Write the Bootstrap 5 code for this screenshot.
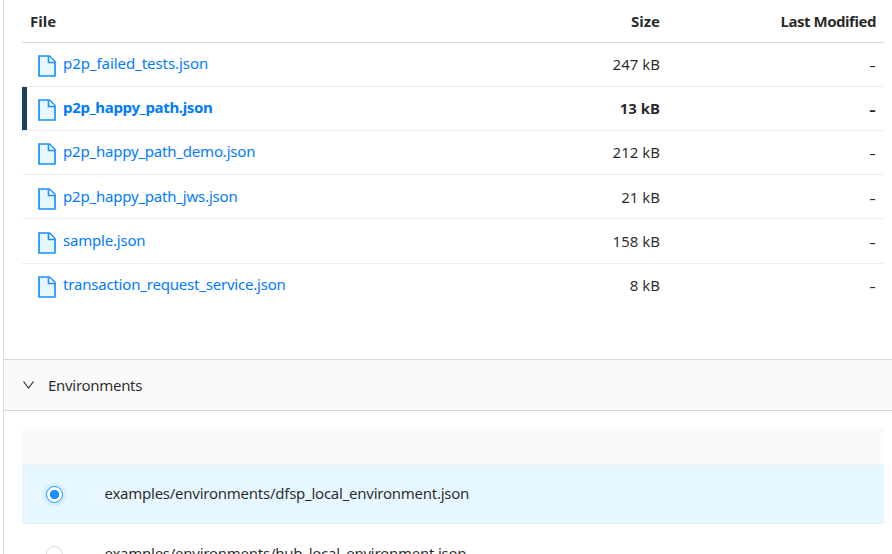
<!DOCTYPE html>
<html lang="en">
<head>
<meta charset="utf-8">
<meta name="viewport" content="width=device-width, initial-scale=1">
<title>Files and environments</title>
<link href="https://cdn.jsdelivr.net/npm/bootstrap@5.3.0/dist/css/bootstrap.min.css" rel="stylesheet">
<style>
body{font-family:"Noto Sans",sans-serif;font-size:15px;line-height:24px;color:rgba(0,0,0,.85);height:554px}
.panel{height:554px;margin-left:3px;border-left:1px solid #d9d9d9}
.files-wrap{height:359px;padding:0 8px 0 18px}
.files{table-layout:fixed;color:inherit;--bs-table-color:#262626}
.files>:not(caption)>*>*{padding:0 8px;vertical-align:middle;border-bottom:1px solid #ededed;box-shadow:none}
.files thead th{height:42px;padding-top:1px;border-bottom-color:#d9d9d9}
.files thead th:last-child{letter-spacing:-.46px}
.files tbody td{height:44.2px}
.files tbody tr:nth-child(5) td{height:44.6px}
.files tbody tr:last-child td{height:42px;border-bottom:0}
.files .picked td{font-weight:700}
.files .picked td:first-child{box-shadow:inset 5px 0 #1d3f5e}
.files a{color:#007bff;letter-spacing:-.2px;padding-bottom:2px}
.files tr:first-child a{letter-spacing:-.06px}
.files .picked a{letter-spacing:-.34px}
.dash{display:inline-block;transform:translateY(1px) scaleX(1.35);transform-origin:right}
.doc{width:18px;height:22px;margin:4px 7px 0 8px;flex:none}
.section-head{height:52px;background:#fafafa;border-top:1px solid #d9d9d9;border-bottom:1px solid #d9d9d9;padding-left:18px}
.section-head svg{margin-right:13px}
.section-title{letter-spacing:-.3px}
.env-wrap{height:143px;padding:18px 8px 0 18px}
.env-head{height:36px;background:#fafafa;border-bottom:1px solid #f0f0f0;border-radius:2px 2px 0 0}
.env-row{height:60px;border-bottom:1px solid #f0f0f0;padding-left:24px;letter-spacing:-.25px}
.env-row.active{height:59px;background:#e6f7ff;border-color:#e0eef6}
.env-row span{padding-bottom:2px}
.env-row .form-check-input{width:17px;height:17px;margin:1px 41.5px 0 0;border:1px solid #d9d9d9}
.env-row .form-check-input:checked{background:radial-gradient(circle,#1890ff 4.3px,#fff 5px);border-color:#1890ff;box-shadow:0 0 0 3px rgba(24,144,255,.08)}
</style>
<script src="https://cdn.jsdelivr.net/npm/bootstrap@5.3.0/dist/js/bootstrap.bundle.min.js"></script>
</head>
<body class="overflow-hidden bg-white">
<svg class="d-none"><symbol id="doc" viewBox="0 0 18 22"><path d="M1 1h10.5L17 6.5V21H1z" fill="#e6f7ff" stroke="#1890ff" stroke-width="1.7"/><path d="M10.5 1v6.5H17" fill="#fff" stroke="#1890ff" stroke-width="1.6"/></symbol></svg>
<main class="panel overflow-hidden">
<section class="files-wrap">
<table class="table files mb-0">
<colgroup><col><col style="width:120px"><col style="width:216px"></colgroup>
<thead><tr><th>File</th><th class="text-end">Size</th><th class="text-end">Last Modified</th></tr></thead>
<tbody>
<tr><td><div class="d-flex align-items-center"><svg class="doc"><use href="#doc"/></svg><a class="text-decoration-none" href="#">p2p_failed_tests.json</a></div></td><td class="text-end">247 kB</td><td class="text-end"><span class="dash">-</span></td></tr>
<tr class="picked"><td><div class="d-flex align-items-center"><svg class="doc"><use href="#doc"/></svg><a class="text-decoration-none" href="#">p2p_happy_path.json</a></div></td><td class="text-end">13 kB</td><td class="text-end"><span class="dash">-</span></td></tr>
<tr><td><div class="d-flex align-items-center"><svg class="doc"><use href="#doc"/></svg><a class="text-decoration-none" href="#">p2p_happy_path_demo.json</a></div></td><td class="text-end">212 kB</td><td class="text-end"><span class="dash">-</span></td></tr>
<tr><td><div class="d-flex align-items-center"><svg class="doc"><use href="#doc"/></svg><a class="text-decoration-none" href="#">p2p_happy_path_jws.json</a></div></td><td class="text-end">21 kB</td><td class="text-end"><span class="dash">-</span></td></tr>
<tr><td><div class="d-flex align-items-center"><svg class="doc"><use href="#doc"/></svg><a class="text-decoration-none" href="#">sample.json</a></div></td><td class="text-end">158 kB</td><td class="text-end"><span class="dash">-</span></td></tr>
<tr><td><div class="d-flex align-items-center"><svg class="doc"><use href="#doc"/></svg><a class="text-decoration-none" href="#">transaction_request_service.json</a></div></td><td class="text-end">8 kB</td><td class="text-end"><span class="dash">-</span></td></tr>
</tbody>
</table>
</section>
<div class="section-head d-flex align-items-center"><svg width="13" height="10" viewBox="0 0 13 10"><path d="M1.5 1.5l5 6.5 5-6.5" fill="none" stroke="#333" stroke-width="1.2"/></svg><span class="section-title">Environments</span></div>
<section class="env-wrap overflow-hidden">
<div class="env-head"></div>
<label class="env-row active d-flex align-items-center"><input class="form-check-input" type="radio" name="env" checked><span>examples/environments/dfsp_local_environment.json</span></label>
<label class="env-row d-flex align-items-center"><input class="form-check-input" type="radio" name="env"><span>examples/environments/hub_local_environment.json</span></label>
</section>
</main>
</body>
</html>
